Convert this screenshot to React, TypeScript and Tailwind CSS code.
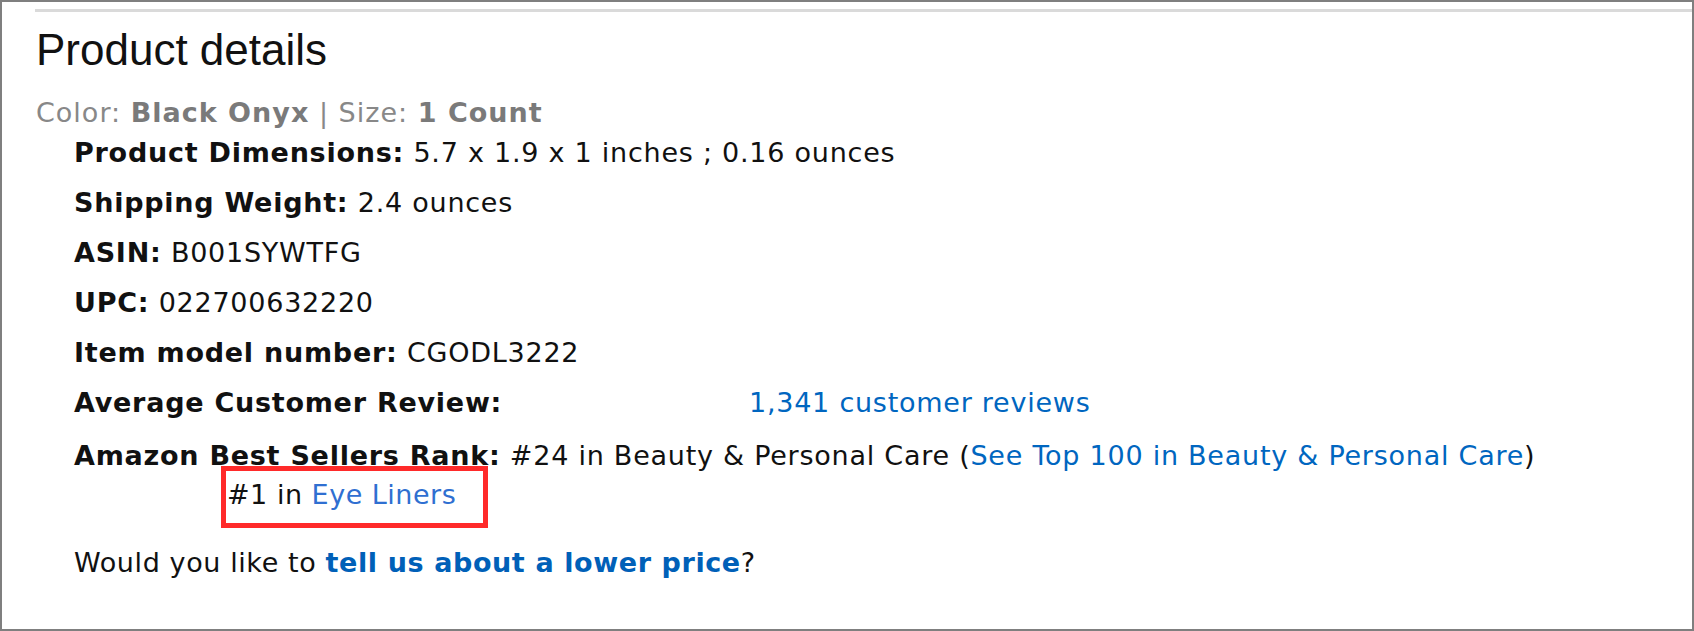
export default function App() {
  const body = { fontFamily: '"DejaVu Sans", Verdana, sans-serif' };
  return (
    <div
      className="w-[1694px] h-[631px] border-2 border-[#7f7f7f] bg-white overflow-hidden"
      style={body}
    >
      <div className="ml-[33px] mt-[7px] h-[3px] bg-[#dadada]" />
      <div className="pl-[34px]">
        <h2
          className="mt-[16px] text-[44px] leading-[44px] text-[#111]"
          style={{ fontFamily: '"Liberation Sans", Arial, sans-serif' }}
        >
          Product details
        </h2>
        <div className="mt-[21px] text-[27px] leading-[39px] tracking-[1px] text-[#888]">
          Color: <b className="font-bold text-[#7a7a7a]">Black Onyx</b> | Size:{" "}
          <b className="font-bold text-[#7a7a7a]">1 Count</b>
        </div>
        <ul className="mt-[1px] pl-[38px] text-[27px] leading-[39px] tracking-[0.75px] text-[#111]">
          <li className="mb-[11px]">
            <b>Product Dimensions:</b> 5.7 x 1.9 x 1 inches ; 0.16 ounces
          </li>
          <li className="mb-[11px]">
            <b>Shipping Weight:</b> 2.4 ounces
          </li>
          <li className="mb-[11px]">
            <b>ASIN:</b> B001SYWTFG
          </li>
          <li className="mb-[11px]">
            <b>UPC:</b> 022700632220
          </li>
          <li className="mb-[11px]">
            <b>Item model number:</b> CGODL3222
          </li>
          <li className="mb-[14px] flex">
            <b className="w-[675px] shrink-0">Average Customer Review:</b>
            <span className="text-[#0066c0]">1,341 customer reviews</span>
          </li>
          <li>
            <div>
              <b>Amazon Best Sellers Rank:</b> #24 in Beauty &amp; Personal Care (
              <span className="text-[#0066c0]">See Top 100 in Beauty &amp; Personal Care</span>)
            </div>
            <div className="pl-[153px]">
              <span className="relative inline-block tracking-[0.5px]">
                #1 in <span className="text-[#2f6fd1]">Eye Liners</span>
                <span className="absolute left-[-6px] top-[-9px] w-[267px] h-[62px] border-[5px] border-[#ff2a2a]" />
              </span>
            </div>
          </li>
        </ul>
        <div className="mt-[29px] pl-[38px] text-[27px] leading-[39px] tracking-[0.6px] text-[#111]">
          Would you like to{" "}
          <b className="text-[#0060b8]">tell us about a lower price</b>?
        </div>
      </div>
    </div>
  );
}
